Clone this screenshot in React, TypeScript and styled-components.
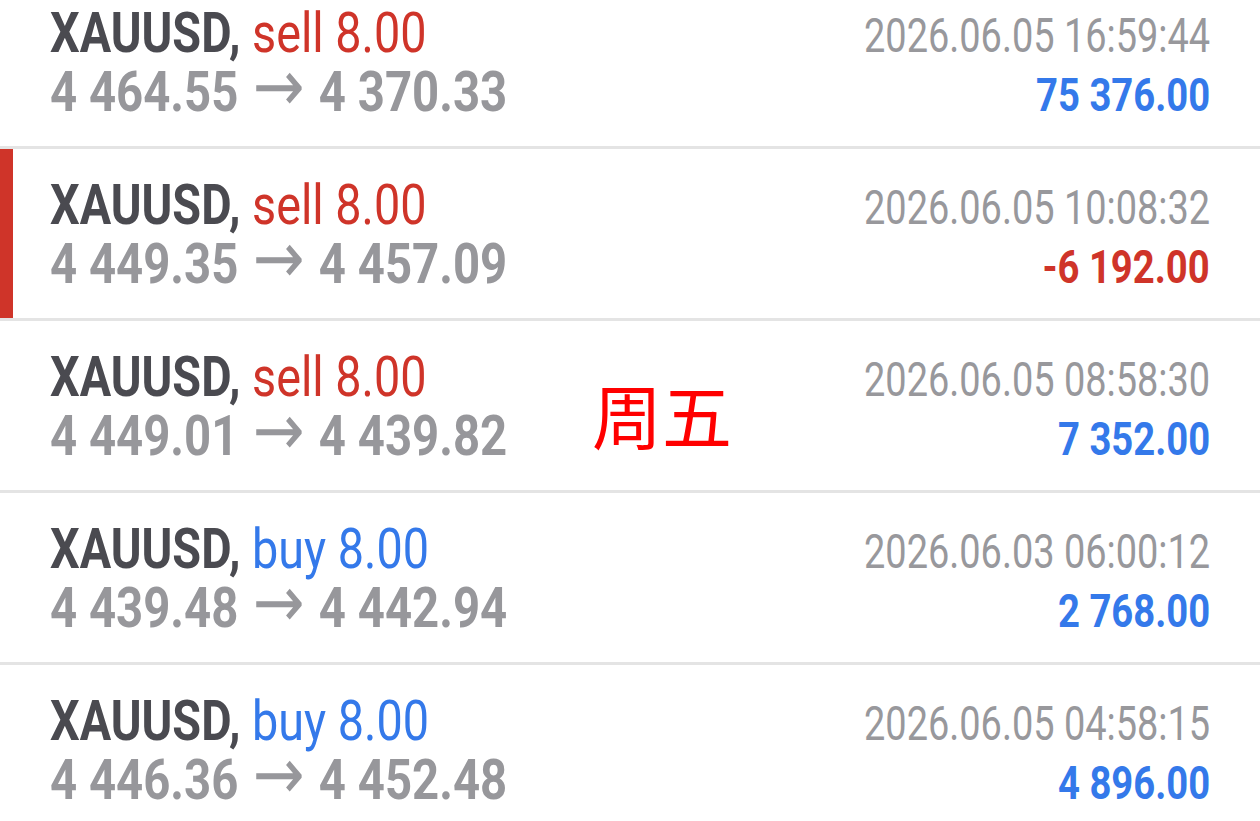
import styled, { createGlobalStyle } from "styled-components";

const GlobalStyle = createGlobalStyle`
    html, body {
        margin: 0;
        padding: 0;
        background: #ffffff;
        overflow: hidden;
    }
    body {
        font-family: Roboto, "Noto Sans", sans-serif;
    }
`;

type Side = "buy" | "sell";

interface Deal {
    "symbol": string;
    "side": Side;
    "volume": string;
    "open": string;
    "close": string;
    "time": string;
    "profit": string;
    "marked"?: boolean;
}

const deals: Deal[] = [
    {
        "symbol": "XAUUSD",
        "side": "sell",
        "volume": "8.00",
        "open": "4 464.55",
        "close": "4 370.33",
        "time": "2026.06.05 16:59:44",
        "profit": "75 376.00",
    },
    {
        "symbol": "XAUUSD",
        "side": "sell",
        "volume": "8.00",
        "open": "4 449.35",
        "close": "4 457.09",
        "time": "2026.06.05 10:08:32",
        "profit": "-6 192.00",
        "marked": true,
    },
    {
        "symbol": "XAUUSD",
        "side": "sell",
        "volume": "8.00",
        "open": "4 449.01",
        "close": "4 439.82",
        "time": "2026.06.05 08:58:30",
        "profit": "7 352.00",
    },
    {
        "symbol": "XAUUSD",
        "side": "buy",
        "volume": "8.00",
        "open": "4 439.48",
        "close": "4 442.94",
        "time": "2026.06.03 06:00:12",
        "profit": "2 768.00",
    },
    {
        "symbol": "XAUUSD",
        "side": "buy",
        "volume": "8.00",
        "open": "4 446.36",
        "close": "4 452.48",
        "time": "2026.06.05 04:58:15",
        "profit": "4 896.00",
    },
];

const RED = "#cf3429";
const BLUE = "#3479ea";

const Viewport = styled.div`
    position: relative;
    width: 1260px;
    height: 821px;
    overflow: hidden;
`;

const List = styled.div`
    display: flex;
    flex-direction: column;
    margin-top: -23px;
`;

const Row = styled.div<{ $marked?: boolean }>`
    display: flex;
    flex-direction: column;
    box-sizing: border-box;
    height: 172px;
    padding: 27px 50px 0 50px;
    border-bottom: 3px solid #e4e4e4;
    box-shadow: ${({ $marked }) =>
        $marked ? `inset 13px 0 0 ${RED}` : "none"};
`;

const Line = styled.div`
    display: flex;
    justify-content: space-between;
    align-items: baseline;
    height: 59px;
    line-height: 59px;
    white-space: nowrap;
`;

// the app font is a condensed face; squeeze Roboto to match
const Condensed = styled.span<{ $align?: "left" | "right"; $scale: number }>`
    display: inline-block;
    transform: scaleX(${({ $scale }) => $scale});
    transform-origin: ${({ $align }) =>
        $align === "right" ? "right center" : "left center"};
`;

const Symbol = styled.span`
    font-size: 56px;
    font-weight: 700;
    color: #4a4a50;
`;

const Side = styled.span<{ $side: Side }>`
    font-size: 56px;
    font-weight: 400;
    color: ${({ $side }) => ($side === "buy" ? BLUE : RED)};
`;

const Prices = styled.span`
    font-size: 55px;
    font-weight: 700;
    color: #97979b;
`;

const Arrow = styled.span`
    font-family: "DejaVu Sans", sans-serif;
    font-size: 72px;
    font-weight: 400;
    line-height: 0;
    margin: 0 3px;
`;

const Time = styled.span`
    font-size: 48px;
    font-weight: 400;
    color: #98989c;
`;

const Profit = styled.span<{ $loss: boolean }>`
    font-size: 47px;
    font-weight: 700;
    color: ${({ $loss }) => ($loss ? RED : BLUE)};
`;

const Stamp = styled.div`
    position: absolute;
    left: 592px;
    top: 374px;
    font-family: "Noto Sans CJK SC", "Noto Sans CJK JP", sans-serif;
    font-size: 70px;
    line-height: 80px;
    color: #ff0000;
`;

function DealRow({ deal }: { "deal": Deal }) {
    const loss = deal.profit.startsWith("-");
    return (
        <Row $marked={deal.marked}>
            <Line>
                <Condensed $scale={0.835}>
                    <Symbol>{deal.symbol}, </Symbol>
                    <Side $side={deal.side}>
                        {deal.side} {deal.volume}
                    </Side>
                </Condensed>
                <Condensed $align="right" $scale={0.79}>
                    <Time>{deal.time}</Time>
                </Condensed>
            </Line>
            <Line>
                <Condensed $scale={0.86}>
                    <Prices>
                        {deal.open} <Arrow>→</Arrow> {deal.close}
                    </Prices>
                </Condensed>
                <Condensed $align="right" $scale={0.813}>
                    <Profit $loss={loss}>{deal.profit}</Profit>
                </Condensed>
            </Line>
        </Row>
    );
}

export default function App() {
    return (
        <Viewport>
            <GlobalStyle />
            <List>
                {deals.map((deal) => (
                    <DealRow key={deal.time} deal={deal} />
                ))}
            </List>
            <Stamp>周五</Stamp>
        </Viewport>
    );
}
